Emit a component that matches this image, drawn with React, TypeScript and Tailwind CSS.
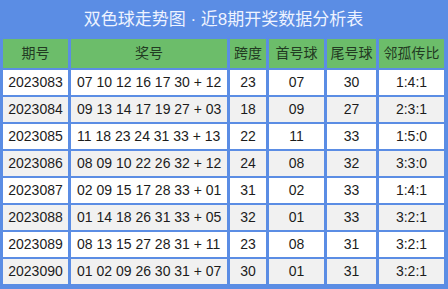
const HEADERS = ["期号", "奖号", "跨度", "首号球", "尾号球", "邻孤传比"];

const ROWS: string[][] = [
  ["2023083", "07 10 12 16 17 30 + 12", "23", "07", "30", "1:4:1"],
  ["2023084", "09 13 14 17 19 27 + 03", "18", "09", "27", "2:3:1"],
  ["2023085", "11 18 23 24 31 33 + 13", "22", "11", "33", "1:5:0"],
  ["2023086", "08 09 10 22 26 32 + 12", "24", "08", "32", "3:3:0"],
  ["2023087", "02 09 15 17 28 33 + 01", "31", "02", "33", "1:4:1"],
  ["2023088", "01 14 18 26 31 33 + 05", "32", "01", "33", "3:2:1"],
  ["2023089", "08 13 15 27 28 31 + 11", "23", "08", "31", "3:2:1"],
  ["2023090", "01 02 09 26 30 31 + 07", "30", "01", "31", "3:2:1"],
];

export default function App() {
  return (
    <div
      className="w-[448px] h-[289px] bg-[#5b8de4] pl-[3px] pr-[4px] pb-[5px]"
      style={{ fontFamily: '"Liberation Sans", "Noto Sans CJK SC", sans-serif' }}
    >
      {/* Title */}
      <div className="h-[39px] flex items-center justify-center text-[17px] text-[#eef3ff]">
        双色球走势图 · 近8期开奖数据分析表
      </div>

      {/* Table */}
      <div className="grid grid-cols-[65px_156px_36px_55px_49px_1fr] gap-x-[3px] gap-y-[2px] text-[14px]">
        {HEADERS.map((h) => (
          <div
            key={h}
            className="h-[29px] flex items-center justify-center bg-[#6cbd6a] text-[#223a22]"
          >
            {h}
          </div>
        ))}
        {ROWS.map((row, i) =>
          row.map((cell, j) => (
            <div
              key={`${i}-${j}`}
              className={`h-[25px] flex items-center text-[#1c1c1c] ${
                j === 1 ? "pl-[6px]" : "justify-center"
              } ${i % 2 === 1 ? "bg-[#f1f1f1]" : "bg-white"}`}
            >
              {cell}
            </div>
          ))
        )}
      </div>
    </div>
  );
}
